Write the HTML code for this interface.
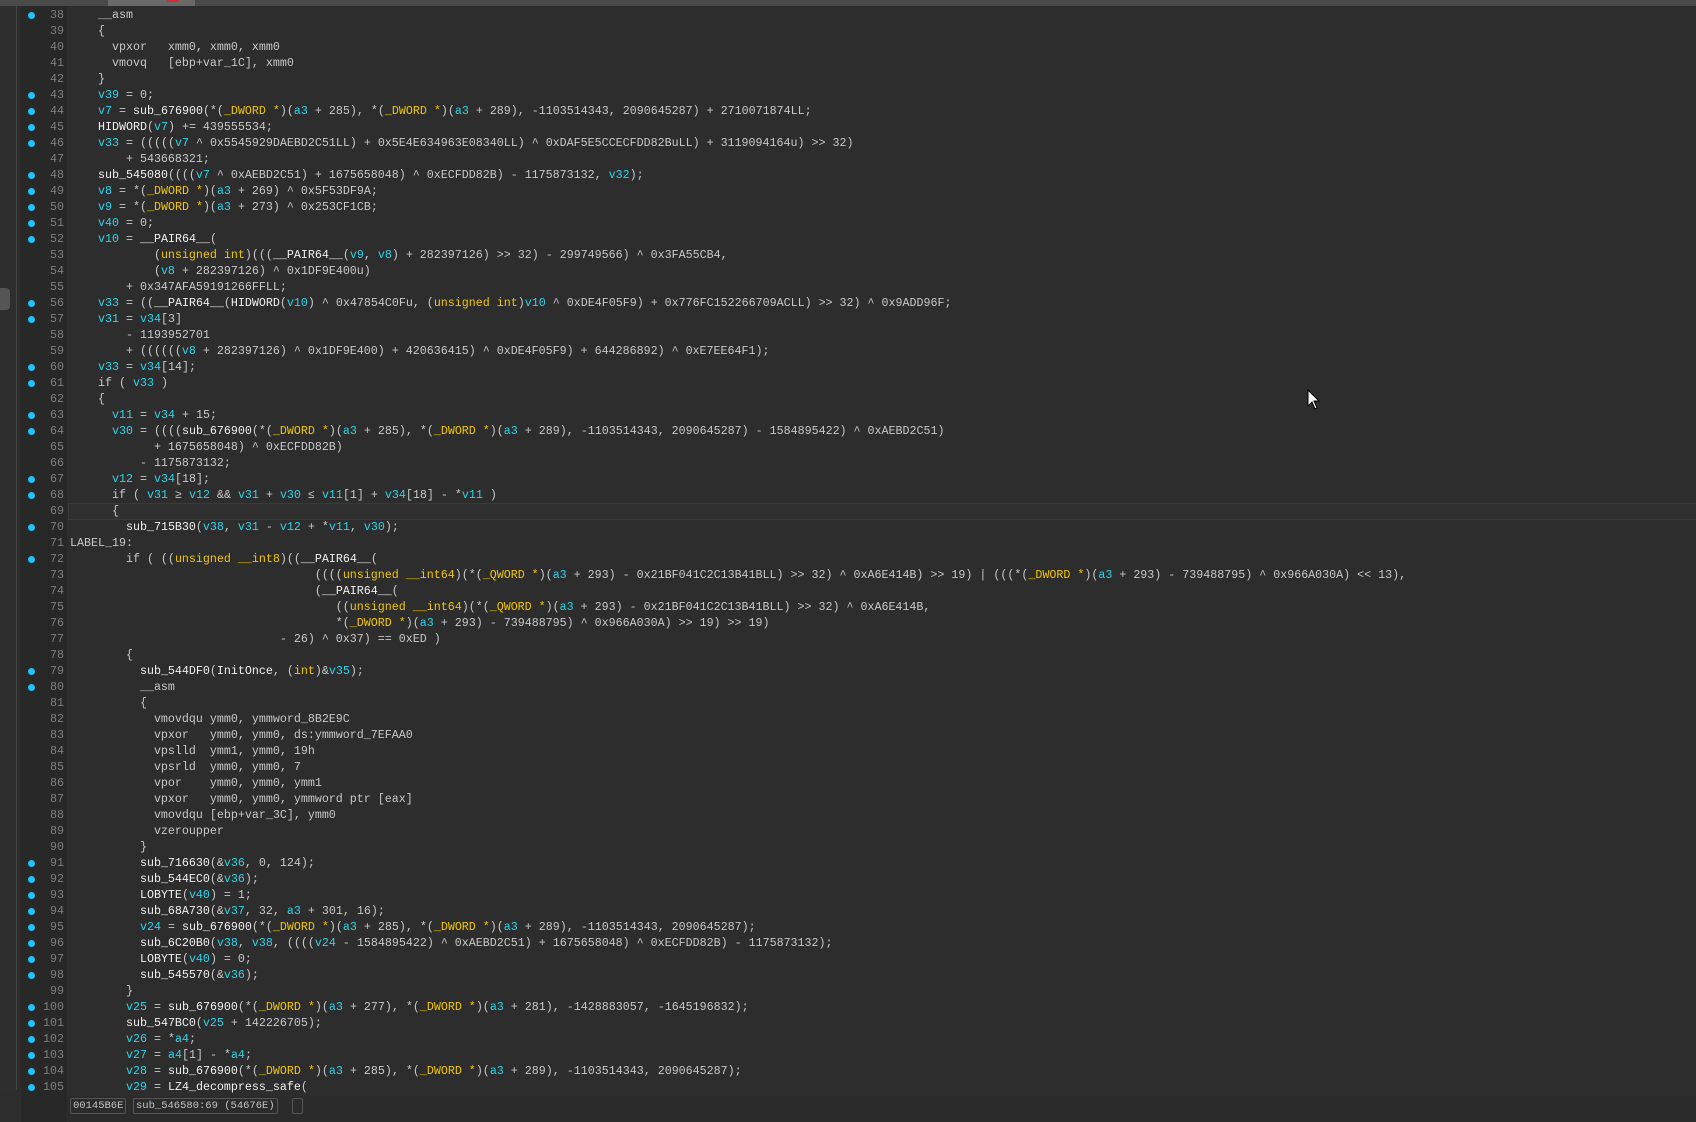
<!DOCTYPE html>
<html><head><meta charset="utf-8"><style>
body{margin:0;width:1696px;height:1122px;background:#2d2d2d;overflow:hidden;position:relative;font-family:"Liberation Mono",monospace}
#top{position:absolute;left:0;top:0;width:1696px;height:6px;background:#4a4a4a}
#side{position:absolute;left:0;top:6px;width:16px;height:1084px;background:#2e2e2e;border-right:1px solid #444}
#thumb{position:absolute;left:0;top:282px;width:10px;height:22px;background:#555;border-radius:0 4px 4px 0}
#gut{position:absolute;left:21px;top:6px;width:46px;height:1116px;background:#282828}
.l{position:absolute;left:0;height:16px;width:1696px;font-size:11.67px;line-height:16px;white-space:pre;color:#c8c8c8}
.n{position:absolute;left:36px;width:28px;text-align:right;color:#7e7e7e}
.d{position:absolute;left:28px;top:5px;width:7px;height:7px;border-radius:50%;background:#1ec4f4}
.t{position:absolute;left:70px}
.c{color:#2cd4ec}.y{color:#f2c600}.w{color:#f0f0f0}
#hl{position:absolute;left:68px;top:503px;width:1628px;height:15px;border:1px solid #3a3a3a;background:#303030}
#sb{position:absolute;top:1098px;font-size:10.5px;line-height:14px;color:#c4c4c4;border:1px solid #555;border-radius:2px;height:14px;padding:0 2px}
</style></head><body>
<div id="top"><div style="position:absolute;left:108px;top:0;width:87px;height:6px;background:#6a6a6a"></div><div style="position:absolute;left:167px;top:0;width:12px;height:2px;background:#d03030"></div></div>
<div id="side"><div id="thumb"></div></div><div id="gut"></div>
<div id="hl"></div>
<div class="l" style="top:7px"><span class="d"></span><span class="n">38</span><span class="t">    __asm</span></div>
<div class="l" style="top:23px"><span class="n">39</span><span class="t">    {</span></div>
<div class="l" style="top:39px"><span class="n">40</span><span class="t">      vpxor   xmm0, xmm0, xmm0</span></div>
<div class="l" style="top:55px"><span class="n">41</span><span class="t">      vmovq   [ebp+var_1C], xmm0</span></div>
<div class="l" style="top:71px"><span class="n">42</span><span class="t">    }</span></div>
<div class="l" style="top:87px"><span class="d"></span><span class="n">43</span><span class="t">    <span class="c">v39</span> = 0;</span></div>
<div class="l" style="top:103px"><span class="d"></span><span class="n">44</span><span class="t">    <span class="c">v7</span> = <span class="w">sub_676900</span>(*(<span class="y">_DWORD *</span>)(<span class="c">a3</span> + 285), *(<span class="y">_DWORD *</span>)(<span class="c">a3</span> + 289), -1103514343, 2090645287) + 2710071874LL;</span></div>
<div class="l" style="top:119px"><span class="d"></span><span class="n">45</span><span class="t">    <span class="w">HIDWORD</span>(<span class="c">v7</span>) += 439555534;</span></div>
<div class="l" style="top:135px"><span class="d"></span><span class="n">46</span><span class="t">    <span class="c">v33</span> = (((((<span class="c">v7</span> ^ 0x5545929DAEBD2C51LL) + 0x5E4E634963E08340LL) ^ 0xDAF5E5CCECFDD82BuLL) + 3119094164u) &gt;&gt; 32)</span></div>
<div class="l" style="top:151px"><span class="n">47</span><span class="t">        + 543668321;</span></div>
<div class="l" style="top:167px"><span class="d"></span><span class="n">48</span><span class="t">    <span class="w">sub_545080</span>((((<span class="c">v7</span> ^ 0xAEBD2C51) + 1675658048) ^ 0xECFDD82B) - 1175873132, <span class="c">v32</span>);</span></div>
<div class="l" style="top:183px"><span class="d"></span><span class="n">49</span><span class="t">    <span class="c">v8</span> = *(<span class="y">_DWORD *</span>)(<span class="c">a3</span> + 269) ^ 0x5F53DF9A;</span></div>
<div class="l" style="top:199px"><span class="d"></span><span class="n">50</span><span class="t">    <span class="c">v9</span> = *(<span class="y">_DWORD *</span>)(<span class="c">a3</span> + 273) ^ 0x253CF1CB;</span></div>
<div class="l" style="top:215px"><span class="d"></span><span class="n">51</span><span class="t">    <span class="c">v40</span> = 0;</span></div>
<div class="l" style="top:231px"><span class="d"></span><span class="n">52</span><span class="t">    <span class="c">v10</span> = <span class="w">__PAIR64__</span>(</span></div>
<div class="l" style="top:247px"><span class="n">53</span><span class="t">            (<span class="y">unsigned int</span>)(((<span class="w">__PAIR64__</span>(<span class="c">v9</span>, <span class="c">v8</span>) + 282397126) &gt;&gt; 32) - 299749566) ^ 0x3FA55CB4,</span></div>
<div class="l" style="top:263px"><span class="n">54</span><span class="t">            (<span class="c">v8</span> + 282397126) ^ 0x1DF9E400u)</span></div>
<div class="l" style="top:279px"><span class="n">55</span><span class="t">        + 0x347AFA59191266FFLL;</span></div>
<div class="l" style="top:295px"><span class="d"></span><span class="n">56</span><span class="t">    <span class="c">v33</span> = ((<span class="w">__PAIR64__</span>(<span class="w">HIDWORD</span>(<span class="c">v10</span>) ^ 0x47854C0Fu, (<span class="y">unsigned int</span>)<span class="c">v10</span> ^ 0xDE4F05F9) + 0x776FC152266709ACLL) &gt;&gt; 32) ^ 0x9ADD96F;</span></div>
<div class="l" style="top:311px"><span class="d"></span><span class="n">57</span><span class="t">    <span class="c">v31</span> = <span class="c">v34</span>[3]</span></div>
<div class="l" style="top:327px"><span class="n">58</span><span class="t">        - 1193952701</span></div>
<div class="l" style="top:343px"><span class="n">59</span><span class="t">        + ((((((<span class="c">v8</span> + 282397126) ^ 0x1DF9E400) + 420636415) ^ 0xDE4F05F9) + 644286892) ^ 0xE7EE64F1);</span></div>
<div class="l" style="top:359px"><span class="d"></span><span class="n">60</span><span class="t">    <span class="c">v33</span> = <span class="c">v34</span>[14];</span></div>
<div class="l" style="top:375px"><span class="d"></span><span class="n">61</span><span class="t">    if ( <span class="c">v33</span> )</span></div>
<div class="l" style="top:391px"><span class="n">62</span><span class="t">    {</span></div>
<div class="l" style="top:407px"><span class="d"></span><span class="n">63</span><span class="t">      <span class="c">v11</span> = <span class="c">v34</span> + 15;</span></div>
<div class="l" style="top:423px"><span class="d"></span><span class="n">64</span><span class="t">      <span class="c">v30</span> = ((((<span class="w">sub_676900</span>(*(<span class="y">_DWORD *</span>)(<span class="c">a3</span> + 285), *(<span class="y">_DWORD *</span>)(<span class="c">a3</span> + 289), -1103514343, 2090645287) - 1584895422) ^ 0xAEBD2C51)</span></div>
<div class="l" style="top:439px"><span class="n">65</span><span class="t">            + 1675658048) ^ 0xECFDD82B)</span></div>
<div class="l" style="top:455px"><span class="n">66</span><span class="t">          - 1175873132;</span></div>
<div class="l" style="top:471px"><span class="d"></span><span class="n">67</span><span class="t">      <span class="c">v12</span> = <span class="c">v34</span>[18];</span></div>
<div class="l" style="top:487px"><span class="d"></span><span class="n">68</span><span class="t">      if ( <span class="c">v31</span> ≥ <span class="c">v12</span> &amp;&amp; <span class="c">v31</span> + <span class="c">v30</span> ≤ <span class="c">v11</span>[1] + <span class="c">v34</span>[18] - *<span class="c">v11</span> )</span></div>
<div class="l" style="top:503px"><span class="n">69</span><span class="t">      {</span></div>
<div class="l" style="top:519px"><span class="d"></span><span class="n">70</span><span class="t">        <span class="w">sub_715B30</span>(<span class="c">v38</span>, <span class="c">v31</span> - <span class="c">v12</span> + *<span class="c">v11</span>, <span class="c">v30</span>);</span></div>
<div class="l" style="top:535px"><span class="n">71</span><span class="t">LABEL_19:</span></div>
<div class="l" style="top:551px"><span class="d"></span><span class="n">72</span><span class="t">        if ( ((<span class="y">unsigned __int8</span>)((<span class="w">__PAIR64__</span>(</span></div>
<div class="l" style="top:567px"><span class="n">73</span><span class="t">                                   ((((<span class="y">unsigned __int64</span>)(*(<span class="y">_QWORD *</span>)(<span class="c">a3</span> + 293) - 0x21BF041C2C13B41BLL) &gt;&gt; 32) ^ 0xA6E414B) &gt;&gt; 19) | (((*(<span class="y">_DWORD *</span>)(<span class="c">a3</span> + 293) - 739488795) ^ 0x966A030A) &lt;&lt; 13),</span></div>
<div class="l" style="top:583px"><span class="n">74</span><span class="t">                                   (<span class="w">__PAIR64__</span>(</span></div>
<div class="l" style="top:599px"><span class="n">75</span><span class="t">                                      ((<span class="y">unsigned __int64</span>)(*(<span class="y">_QWORD *</span>)(<span class="c">a3</span> + 293) - 0x21BF041C2C13B41BLL) &gt;&gt; 32) ^ 0xA6E414B,</span></div>
<div class="l" style="top:615px"><span class="n">76</span><span class="t">                                      *(<span class="y">_DWORD *</span>)(<span class="c">a3</span> + 293) - 739488795) ^ 0x966A030A) &gt;&gt; 19) &gt;&gt; 19)</span></div>
<div class="l" style="top:631px"><span class="n">77</span><span class="t">                              - 26) ^ 0x37) == 0xED )</span></div>
<div class="l" style="top:647px"><span class="n">78</span><span class="t">        {</span></div>
<div class="l" style="top:663px"><span class="d"></span><span class="n">79</span><span class="t">          <span class="w">sub_544DF0</span>(<span class="w">InitOnce</span>, (<span class="y">int</span>)&amp;<span class="c">v35</span>);</span></div>
<div class="l" style="top:679px"><span class="d"></span><span class="n">80</span><span class="t">          __asm</span></div>
<div class="l" style="top:695px"><span class="n">81</span><span class="t">          {</span></div>
<div class="l" style="top:711px"><span class="n">82</span><span class="t">            vmovdqu ymm0, ymmword_8B2E9C</span></div>
<div class="l" style="top:727px"><span class="n">83</span><span class="t">            vpxor   ymm0, ymm0, ds:ymmword_7EFAA0</span></div>
<div class="l" style="top:743px"><span class="n">84</span><span class="t">            vpslld  ymm1, ymm0, 19h</span></div>
<div class="l" style="top:759px"><span class="n">85</span><span class="t">            vpsrld  ymm0, ymm0, 7</span></div>
<div class="l" style="top:775px"><span class="n">86</span><span class="t">            vpor    ymm0, ymm0, ymm1</span></div>
<div class="l" style="top:791px"><span class="n">87</span><span class="t">            vpxor   ymm0, ymm0, ymmword ptr [eax]</span></div>
<div class="l" style="top:807px"><span class="n">88</span><span class="t">            vmovdqu [ebp+var_3C], ymm0</span></div>
<div class="l" style="top:823px"><span class="n">89</span><span class="t">            vzeroupper</span></div>
<div class="l" style="top:839px"><span class="n">90</span><span class="t">          }</span></div>
<div class="l" style="top:855px"><span class="d"></span><span class="n">91</span><span class="t">          <span class="w">sub_716630</span>(&amp;<span class="c">v36</span>, 0, 124);</span></div>
<div class="l" style="top:871px"><span class="d"></span><span class="n">92</span><span class="t">          <span class="w">sub_544EC0</span>(&amp;<span class="c">v36</span>);</span></div>
<div class="l" style="top:887px"><span class="d"></span><span class="n">93</span><span class="t">          <span class="w">LOBYTE</span>(<span class="c">v40</span>) = 1;</span></div>
<div class="l" style="top:903px"><span class="d"></span><span class="n">94</span><span class="t">          <span class="w">sub_68A730</span>(&amp;<span class="c">v37</span>, 32, <span class="c">a3</span> + 301, 16);</span></div>
<div class="l" style="top:919px"><span class="d"></span><span class="n">95</span><span class="t">          <span class="c">v24</span> = <span class="w">sub_676900</span>(*(<span class="y">_DWORD *</span>)(<span class="c">a3</span> + 285), *(<span class="y">_DWORD *</span>)(<span class="c">a3</span> + 289), -1103514343, 2090645287);</span></div>
<div class="l" style="top:935px"><span class="d"></span><span class="n">96</span><span class="t">          <span class="w">sub_6C20B0</span>(<span class="c">v38</span>, <span class="c">v38</span>, ((((<span class="c">v24</span> - 1584895422) ^ 0xAEBD2C51) + 1675658048) ^ 0xECFDD82B) - 1175873132);</span></div>
<div class="l" style="top:951px"><span class="d"></span><span class="n">97</span><span class="t">          <span class="w">LOBYTE</span>(<span class="c">v40</span>) = 0;</span></div>
<div class="l" style="top:967px"><span class="d"></span><span class="n">98</span><span class="t">          <span class="w">sub_545570</span>(&amp;<span class="c">v36</span>);</span></div>
<div class="l" style="top:983px"><span class="n">99</span><span class="t">        }</span></div>
<div class="l" style="top:999px"><span class="d"></span><span class="n">100</span><span class="t">        <span class="c">v25</span> = <span class="w">sub_676900</span>(*(<span class="y">_DWORD *</span>)(<span class="c">a3</span> + 277), *(<span class="y">_DWORD *</span>)(<span class="c">a3</span> + 281), -1428883057, -1645196832);</span></div>
<div class="l" style="top:1015px"><span class="d"></span><span class="n">101</span><span class="t">        <span class="w">sub_547BC0</span>(<span class="c">v25</span> + 142226705);</span></div>
<div class="l" style="top:1031px"><span class="d"></span><span class="n">102</span><span class="t">        <span class="c">v26</span> = *<span class="c">a4</span>;</span></div>
<div class="l" style="top:1047px"><span class="d"></span><span class="n">103</span><span class="t">        <span class="c">v27</span> = <span class="c">a4</span>[1] - *<span class="c">a4</span>;</span></div>
<div class="l" style="top:1063px"><span class="d"></span><span class="n">104</span><span class="t">        <span class="c">v28</span> = <span class="w">sub_676900</span>(*(<span class="y">_DWORD *</span>)(<span class="c">a3</span> + 285), *(<span class="y">_DWORD *</span>)(<span class="c">a3</span> + 289), -1103514343, 2090645287);</span></div>
<div class="l" style="top:1079px"><span class="d"></span><span class="n">105</span><span class="t">        <span class="c">v29</span> = <span class="w">LZ4_decompress_safe</span>(</span></div>
<div style="position:absolute;left:68px;top:1096px;width:1628px;height:26px;background:#2b2b2b"></div>
<div id="sb" style="left:70px">00145B6E</div>
<div id="sb" style="left:133px">sub_546580:69 (54676E)</div>
<div id="sb" style="left:292px;width:5px"></div>
<svg style="position:absolute;left:1307px;top:389px" width="14" height="22" viewBox="0 0 14 22"><path d="M1 1 L1 17 L5 13 L8 20 L10 19 L7 12 L12 12 Z" fill="#fff" stroke="#000" stroke-width="1"/></svg>
</body></html>
